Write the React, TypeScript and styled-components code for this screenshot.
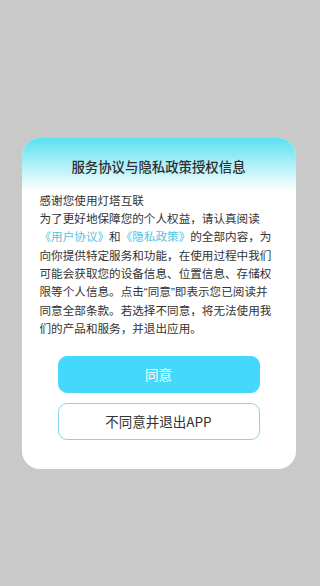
import React from "react";
import styled, { createGlobalStyle } from "styled-components";

const Global = createGlobalStyle`
  html, body { margin: 0; padding: 0; }
  body {
    background: #c9c9c9;
    font-family: "Noto Sans CJK SC", "Noto Sans", sans-serif;
  }
`;

const Page = styled.div`
  width: 320px;
  height: 586px;
  box-sizing: border-box;
  padding-top: 138px;
  display: flex;
  flex-direction: column;
  align-items: center;
  background: #c9c9c9;
`;

const Card = styled.div`
  width: 274px;
  margin-left: -3px;
  background: #ffffff;
  border-radius: 18px;
  overflow: hidden;
  display: flex;
  flex-direction: column;
  padding-bottom: 29px;
`;

const Header = styled.div`
  height: 53px;
  display: flex;
  align-items: center;
  justify-content: center;
  background: linear-gradient(180deg, #5ae0f1 0%, #a6eef7 45%, #ffffff 100%);
`;

const Title = styled.h1`
  margin: 0;
  padding-top: 2px;
  font-size: 13.4px;
  font-weight: 500;
  color: #2f2f2f;
  letter-spacing: 0;
`;

const Body = styled.div`
  padding: 0 20px 0 18px;
  font-size: 11.6px;
  line-height: 18.2px;
  color: #333333;
`;

const Para = styled.p`
  margin: 0;
`;

const Link = styled.span`
  color: #4cc6e6;
`;

const Quote = styled.span`
  font-family: "Liberation Sans", sans-serif;
`;

const Actions = styled.div`
  margin-top: 18px;
  display: flex;
  flex-direction: column;
  align-items: center;
  gap: 10px;
`;

const Button = styled.button<{ $primary?: boolean }>`
  width: 202px;
  height: 37px;
  box-sizing: border-box;
  border-radius: 9px;
  font-family: inherit;
  font-size: 13.5px;
  cursor: pointer;
  border: 1px solid ${(p) => (p.$primary ? "#44d8fd" : "#86d9ec")};
  background: ${(p) => (p.$primary ? "#44d8fd" : "#ffffff")};
  color: ${(p) => (p.$primary ? "#ffffff" : "#333333")};
`;

export default function App() {
  return (
    <Page>
      <Global />
      <Card>
        <Header>
          <Title>服务协议与隐私政策授权信息</Title>
        </Header>
        <Body>
          <Para>感谢您使用灯塔互联</Para>
          <Para>
            为了更好地保障您的个人权益，请认真阅读<Link>《用户协议》</Link>和
            <Link>《隐私政策》</Link>
            的全部内容，为向你提供特定服务和功能，在使用过程中我们可能会获取您的设备信息、位置信息、存储权限等个人信息。点击<Quote>“</Quote>同意<Quote>”</Quote>即表示您已阅读并同意全部条款。若选择不同意，将无法使用我们的产品和服务，并退出应用。
          </Para>
        </Body>
        <Actions>
          <Button $primary>同意</Button>
          <Button>不同意并退出APP</Button>
        </Actions>
      </Card>
    </Page>
  );
}
